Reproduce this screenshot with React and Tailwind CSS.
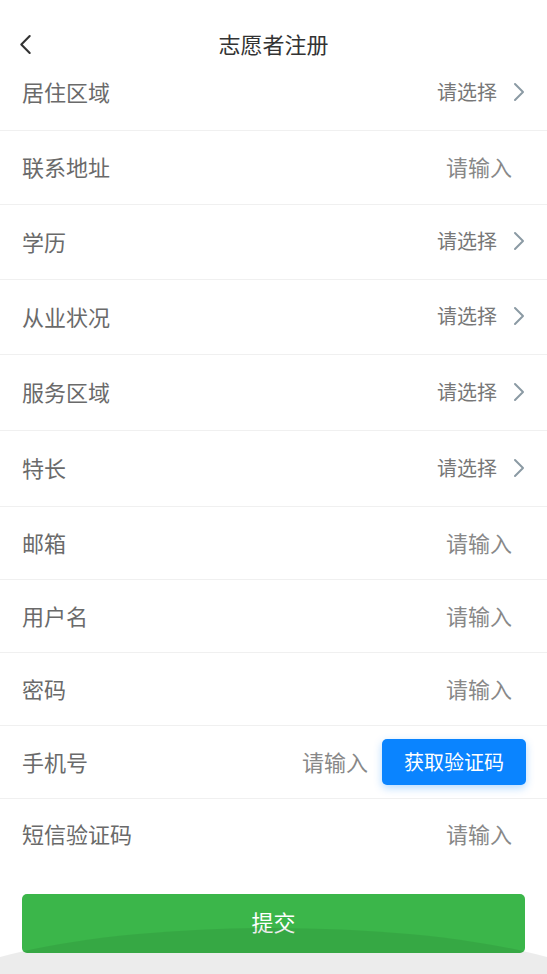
import React from "react";

const rows = [
  { label: "居住区域", type: "select", h: "h-[76px]" },
  { label: "联系地址", type: "input", h: "h-[74px]" },
  { label: "学历", type: "select", h: "h-[75px]" },
  { label: "从业状况", type: "select", h: "h-[75px]" },
  { label: "服务区域", type: "select", h: "h-[76px]" },
  { label: "特长", type: "select", h: "h-[76px]" },
  { label: "邮箱", type: "input", h: "h-[73px]" },
  { label: "用户名", type: "input", h: "h-[73px]" },
  { label: "密码", type: "input", h: "h-[73px]" },
  { label: "手机号", type: "phone", h: "h-[73px]" },
  { label: "短信验证码", type: "input", h: "h-[71px]", last: true },
];

const Chevron = ({ className }) => (
  <svg viewBox="0 0 12 20" className={className} fill="none" stroke="currentColor" strokeWidth="2" strokeLinecap="round" strokeLinejoin="round">
    <path d="M2 2l8 8-8 8" />
  </svg>
);

const Row = ({ row }) => (
  <div className={`${row.h} flex items-center justify-between pl-[22px] pb-[2px] ${row.last ? "" : "border-b border-[#f0f0f0]"}`}>
    <span className="text-[22px] text-[#6a6a6a]">{row.label}</span>
    {row.type === "select" && (
      <div className="flex items-center pr-[22px]">
        <span className="text-[20px] text-[#777]">请选择</span>
        <Chevron className="w-[12px] h-[20px] ml-[16px] text-[#8b9aa4]" />
      </div>
    )}
    {row.type === "input" && (
      <span className="text-[22px] text-[#888] pr-[35px]">请输入</span>
    )}
    {row.type === "phone" && (
      <div className="flex items-center pr-[21px] pt-[2px]">
        <span className="text-[22px] text-[#888] mr-[14px] -mt-[2px]">请输入</span>
        <button className="w-[144px] h-[46px] rounded-[5px] bg-[#0a84ff] text-white text-[20px] shadow-[0_3px_8px_rgba(10,132,255,0.3)]">
          获取验证码
        </button>
      </div>
    )}
  </div>
);

export default function App() {
  return (
    <div
      className="relative h-[974px] overflow-hidden bg-white"
      style={{ fontFamily: '"Noto Sans CJK SC", "Noto Sans", sans-serif' }}
    >
      {/* 顶部导航 */}
      <header className="h-[55px] relative flex items-center justify-center pt-[30px]">
        <Chevron className="absolute left-[19px] top-[34px] w-[13px] h-[21px] text-[#333] rotate-180" />
        <h1 className="text-[22px] leading-none text-[#333]">志愿者注册</h1>
      </header>

      {/* 表单 */}
      <div>
        {rows.map((r) => (
          <Row key={r.label} row={r} />
        ))}
      </div>

      <div className="px-[22px] pt-[24px]">
        <button className="w-full h-[59px] rounded-[5px] bg-[#3bb64a] text-white text-[22px] pb-[4px]">
          提交
        </button>
      </div>

      {/* 底部手势区域 */}
      <div className="absolute left-[-15%] w-[130%] top-[928px] h-[160px] rounded-[50%] bg-black/[0.075] pointer-events-none" />
    </div>
  );
}
